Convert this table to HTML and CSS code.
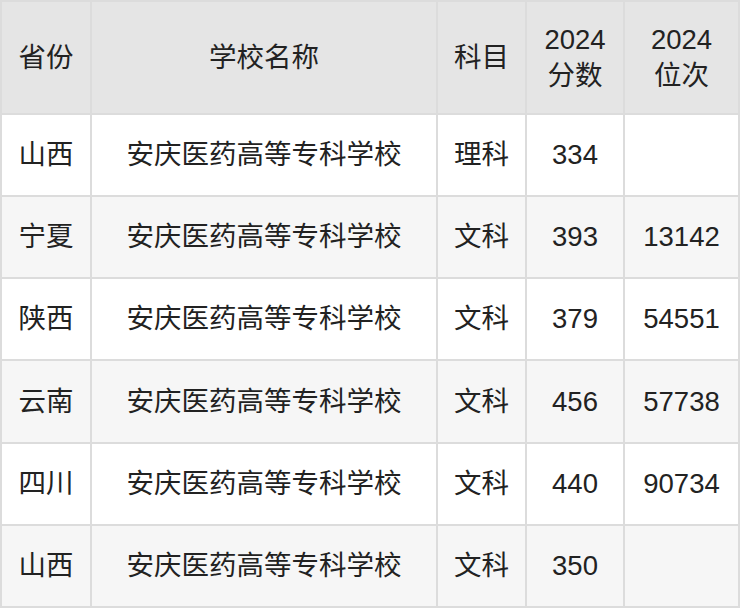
FILE: index.html
```html
<!DOCTYPE html>
<html lang="zh">
<head>
<meta charset="utf-8">
<link rel="stylesheet" href="styles.css">
</head>
<body>
<div class="grid">
  <div class="cell head">省份</div>
  <div class="cell head">学校名称</div>
  <div class="cell head">科目</div>
  <div class="cell head">2024<br>分数</div>
  <div class="cell head">2024<br>位次</div>

  <div class="cell">山西</div><div class="cell">安庆医药高等专科学校</div><div class="cell">理科</div><div class="cell">334</div><div class="cell"></div>
  <div class="cell alt">宁夏</div><div class="cell alt">安庆医药高等专科学校</div><div class="cell alt">文科</div><div class="cell alt">393</div><div class="cell alt">13142</div>
  <div class="cell">陕西</div><div class="cell">安庆医药高等专科学校</div><div class="cell">文科</div><div class="cell">379</div><div class="cell">54551</div>
  <div class="cell alt">云南</div><div class="cell alt">安庆医药高等专科学校</div><div class="cell alt">文科</div><div class="cell alt">456</div><div class="cell alt">57738</div>
  <div class="cell">四川</div><div class="cell">安庆医药高等专科学校</div><div class="cell">文科</div><div class="cell">440</div><div class="cell">90734</div>
  <div class="cell alt">山西</div><div class="cell alt">安庆医药高等专科学校</div><div class="cell alt">文科</div><div class="cell alt">350</div><div class="cell alt"></div>
</div>
</body>
</html>
```

FILE: styles.css
```css
html, body {
  margin: 0;
  padding: 0;
  background: #ffffff;
}
.grid {
  width: 740px;
  height: 608px;
  box-sizing: border-box;
  padding: 2px;
  background: #dcdcdc;
  display: grid;
  grid-template-columns: 88px 344px 87px 96px 113px;
  grid-template-rows: 111px repeat(6, 1fr);
  gap: 2px;
  font-family: "Liberation Sans", "Noto Sans CJK SC", sans-serif;
  font-size: 27.5px;
  color: #222222;
}
.cell {
  background: #ffffff;
  display: flex;
  align-items: center;
  justify-content: center;
  text-align: center;
  line-height: 36px;
}
.cell.alt {
  background: #f6f6f6;
}
.cell.head {
  background: #e5e5e5;
}
```
